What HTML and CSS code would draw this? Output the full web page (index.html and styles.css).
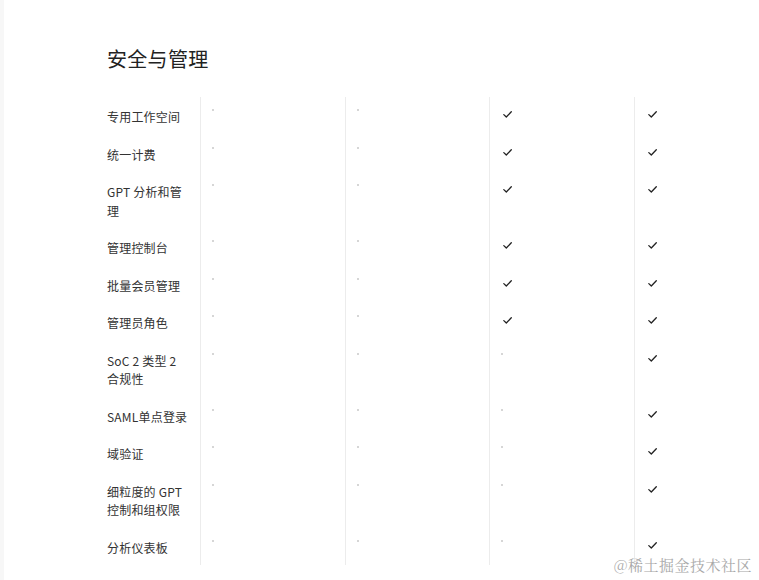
FILE: index.html
```html
<!DOCTYPE html>
<html lang="zh-CN">
<head>
<meta charset="utf-8">
<title>安全与管理</title>
<link rel="stylesheet" href="styles.css">
</head>
<body>
<div class="page">
  <h2 class="title">安全与管理</h2>
  <div class="table">
    <div class="label">专用工作空间</div><div class="cell"><span class="dot"></span></div><div class="cell"><span class="dot"></span></div><div class="cell"><span class="check"></span></div><div class="cell"><span class="check"></span></div>
    <div class="label">统一计费</div><div class="cell"><span class="dot"></span></div><div class="cell"><span class="dot"></span></div><div class="cell"><span class="check"></span></div><div class="cell"><span class="check"></span></div>
    <div class="label">GPT 分析和管理</div><div class="cell"><span class="dot"></span></div><div class="cell"><span class="dot"></span></div><div class="cell"><span class="check"></span></div><div class="cell"><span class="check"></span></div>
    <div class="label">管理控制台</div><div class="cell"><span class="dot"></span></div><div class="cell"><span class="dot"></span></div><div class="cell"><span class="check"></span></div><div class="cell"><span class="check"></span></div>
    <div class="label">批量会员管理</div><div class="cell"><span class="dot"></span></div><div class="cell"><span class="dot"></span></div><div class="cell"><span class="check"></span></div><div class="cell"><span class="check"></span></div>
    <div class="label">管理员角色</div><div class="cell"><span class="dot"></span></div><div class="cell"><span class="dot"></span></div><div class="cell"><span class="check"></span></div><div class="cell"><span class="check"></span></div>
    <div class="label">SoC 2 类型 2 合规性</div><div class="cell"><span class="dot"></span></div><div class="cell"><span class="dot"></span></div><div class="cell"><span class="dot"></span></div><div class="cell"><span class="check"></span></div>
    <div class="label">SAML单点登录</div><div class="cell"><span class="dot"></span></div><div class="cell"><span class="dot"></span></div><div class="cell"><span class="dot"></span></div><div class="cell"><span class="check"></span></div>
    <div class="label">域验证</div><div class="cell"><span class="dot"></span></div><div class="cell"><span class="dot"></span></div><div class="cell"><span class="dot"></span></div><div class="cell"><span class="check"></span></div>
    <div class="label">细粒度的 GPT 控制和组权限</div><div class="cell"><span class="dot"></span></div><div class="cell"><span class="dot"></span></div><div class="cell"><span class="dot"></span></div><div class="cell"><span class="check"></span></div>
    <div class="label">分析仪表板</div><div class="cell"><span class="dot"></span></div><div class="cell"><span class="dot"></span></div><div class="cell"><span class="dot"></span></div><div class="cell"><span class="check"></span></div>
  </div>
</div>
<div class="watermark">@稀土掘金技术社区</div>
</body>
</html>
```
FILE: styles.css
```css
html, body {
  margin: 0;
  padding: 0;
  background: #fff;
  overflow: hidden;
}
body {
  font-family: "Noto Sans CJK SC", "Noto Sans", sans-serif;
  color: #333;
  height: 580px;
  border-left: 4px solid #f7f7f7;
  box-sizing: border-box;
}
.page {
  padding: 44px 0 0 103px;
}
.title {
  margin: 0;
  font-size: 20px;
  font-weight: 400;
  line-height: 30px;
  color: #222;
  letter-spacing: 0.3px;
}
.table {
  margin-top: 23px;
  display: grid;
  grid-template-columns: 93px 145px 144px 145px 145px;
  width: 672px;
}
.label {
  font-size: 12px;
  line-height: 18.5px;
  padding: 11px 11px 8px 0;
  color: #333;
  letter-spacing: 0.2px;
}
.cell {
  border-left: 1px solid #ececec;
  position: relative;
  padding: 12px 0 0 11px;
}
.dot {
  display: block;
  width: 2px;
  height: 2px;
  background: #d6d6d6;
}
.check {
  display: block;
  width: 9px;
  height: 7px;
  margin: 2px 0 0 2px;
  background: no-repeat center / 9px 7px url("data:image/svg+xml,%3Csvg xmlns='http://www.w3.org/2000/svg' viewBox='0 0 9 7'%3E%3Cpath d='M0.8 3.6 L3.3 6 L8.3 0.8' fill='none' stroke='%23222' stroke-width='1.3' stroke-linecap='round' stroke-linejoin='round'/%3E%3C/svg%3E");
}
.watermark {
  position: absolute;
  right: 7px;
  bottom: 5px;
  font-family: "Noto Serif CJK SC", "Noto Sans CJK SC", serif;
  font-size: 15px;
  line-height: 20px;
  color: #a8a8a8;
  letter-spacing: 0.5px;
}
```
